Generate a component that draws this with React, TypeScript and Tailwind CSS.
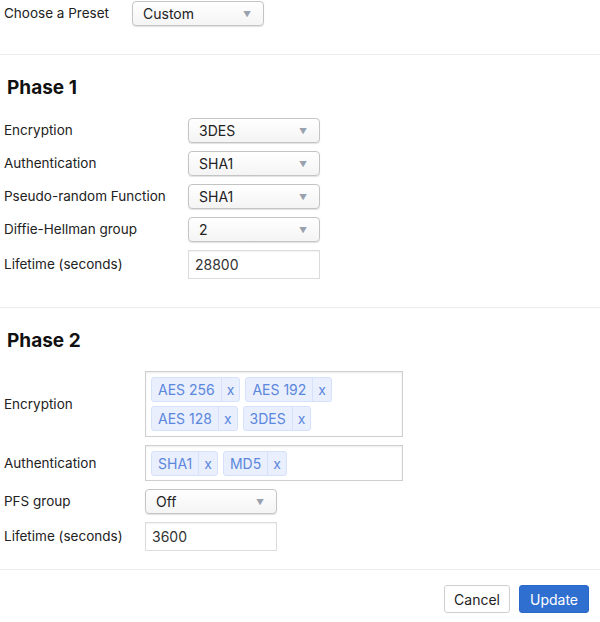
import React from 'react';

const Caret = () => (
    <span className="text-[8px] text-gray-400 leading-none">▼</span>
);

const Select = ({ value, width = 'w-[132px]' }: { value: string; width?: string }) => (
    <div className={`${width} h-[25px] flex items-center justify-between pl-[10px] pr-[12px] border border-[#c4c4c4] rounded-[4px] bg-gradient-to-b from-white to-[#f4f4f4] shadow-[0_1px_1px_rgba(0,0,0,0.12)] text-[14px] text-[#222]`}>
        <span>{value}</span>
        <Caret />
    </div>
);

const TextInput = ({ value, width = 'w-[132px]' }: { value: string; width?: string }) => (
    <div className={`${width} h-[29px] flex items-center px-[6px] border border-[#dcdcdc] bg-white text-[14px] text-[#333] shadow-[inset_0_1px_1px_rgba(0,0,0,0.05)]`}>
        {value}
    </div>
);

const Tag = ({ label }: { label: string }) => (
    <div className="h-[25px] flex items-stretch border border-[#d6e2fb] bg-[#e9effd] rounded-[3px] text-[14px] text-[#5b87dc]">
        <span className="flex items-center px-[6px]">{label}</span>
        <span className="flex items-center px-[5px] border-l border-[#d6e2fb]">x</span>
    </div>
);

const Row = ({ label, labelWidth, children }: { label: string; labelWidth: string; children: React.ReactNode }) => (
    <div className="flex items-center">
        <div className={`${labelWidth} pl-[4px] text-[13.5px] text-[#222]`}>{label}</div>
        {children}
    </div>
);

export default function App() {
    return (
        <div className="w-[600px] h-[622px] bg-white font-['Inter','Liberation_Sans',sans-serif] overflow-hidden">
            <div className="flex items-center pt-[1px] h-[26px]">
                <div className="w-[132px] pl-[4px] text-[13.5px] text-[#222]">Choose a Preset</div>
                <Select value="Custom" />
            </div>

            <div className="mt-[28px] border-t border-[#ececec]" />

            <div className="pl-[7px] pt-[21px] text-[19px] font-bold text-[#111] leading-[24px]">Phase 1</div>

            <div className="mt-[18px] flex flex-col gap-[8px]">
                <Row label="Encryption" labelWidth="w-[188px]"><Select value="3DES" /></Row>
                <Row label="Authentication" labelWidth="w-[188px]"><Select value="SHA1" /></Row>
                <Row label="Pseudo-random Function" labelWidth="w-[188px]"><Select value="SHA1" /></Row>
                <Row label="Diffie-Hellman group" labelWidth="w-[188px]"><Select value="2" /></Row>
                <Row label="Lifetime (seconds)" labelWidth="w-[188px]"><TextInput value="28800" /></Row>
            </div>

            <div className="mt-[28px] border-t border-[#ececec]" />

            <div className="pl-[7px] pt-[21px] text-[19px] font-bold text-[#111] leading-[24px]">Phase 2</div>

            <div className="mt-[18px] flex flex-col gap-[8px]">
                <Row label="Encryption" labelWidth="w-[145px]">
                    <div className="w-[258px] h-[66px] border border-[#cfcfcf] shadow-[inset_0_1px_2px_rgba(0,0,0,0.08)] px-[5px] py-[5px] flex flex-wrap content-start gap-x-[5px] gap-y-[4px]">
                        <Tag label="AES 256" />
                        <Tag label="AES 192" />
                        <Tag label="AES 128" />
                        <Tag label="3DES" />
                    </div>
                </Row>
                <Row label="Authentication" labelWidth="w-[145px]">
                    <div className="w-[258px] h-[36px] border border-[#cfcfcf] shadow-[inset_0_1px_2px_rgba(0,0,0,0.08)] px-[5px] pt-[5px] flex gap-x-[5px]">
                        <Tag label="SHA1" />
                        <Tag label="MD5" />
                    </div>
                </Row>
                <Row label="PFS group" labelWidth="w-[145px]"><Select value="Off" /></Row>
                <Row label="Lifetime (seconds)" labelWidth="w-[145px]"><TextInput value="3600" /></Row>
            </div>

            <div className="mt-[18px] border-t border-[#ececec]" />

            <div className="flex justify-end gap-[9px] pr-[11px] pt-[15px]">
                <button className="h-[28px] px-[9px] border border-[#cfcfcf] rounded-[3px] bg-white text-[14px] text-[#222]">Cancel</button>
                <button className="h-[28px] px-[10px] border border-[#2c68c8] rounded-[3px] bg-[#2f6fd0] text-[14px] text-white">Update</button>
            </div>
        </div>
    );
}
